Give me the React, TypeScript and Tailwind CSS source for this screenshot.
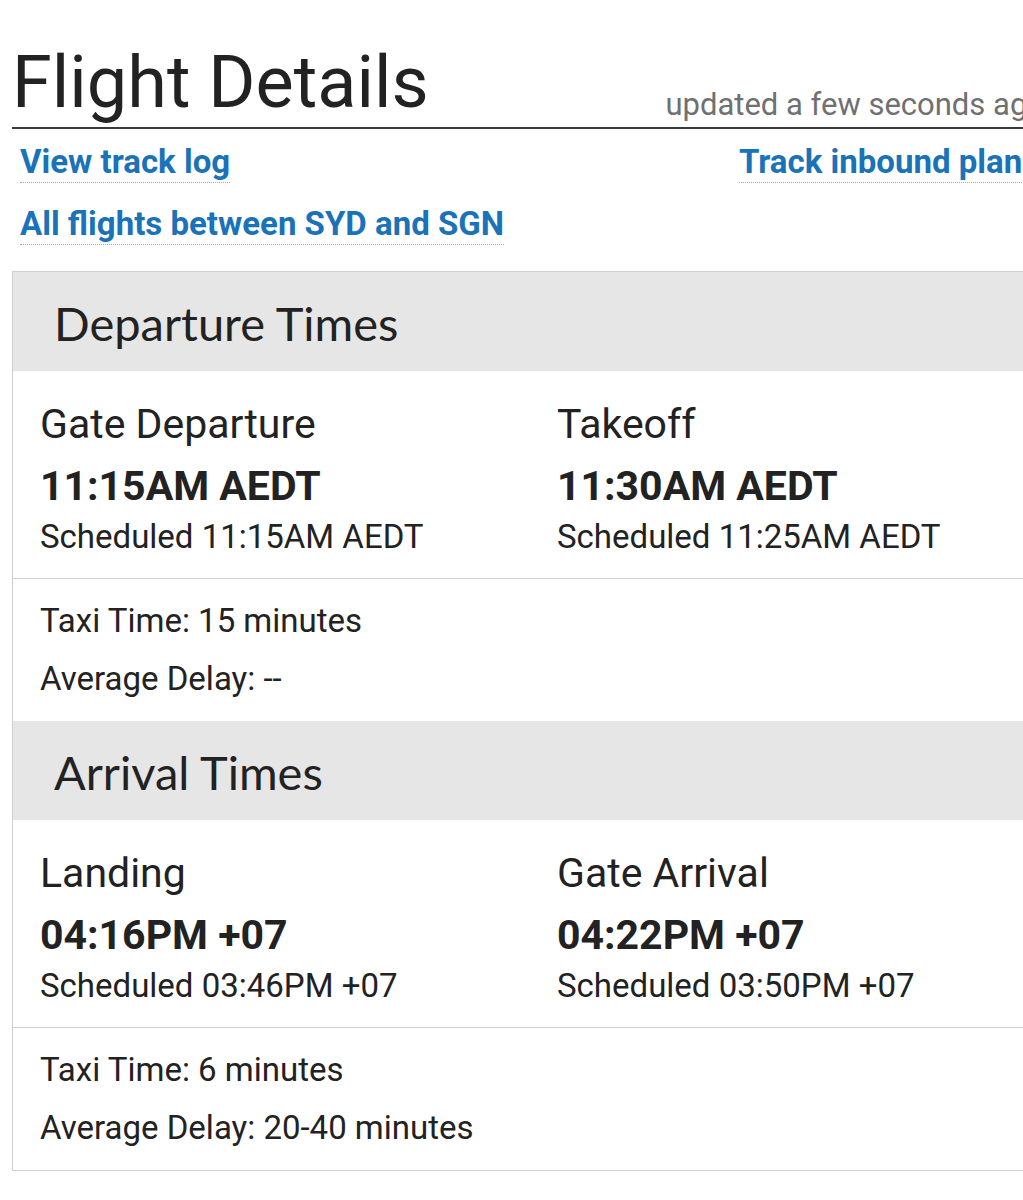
const roboto = "font-['Roboto',_'Liberation_Sans',_sans-serif]"

type Slot = { label: string; actual: string; scheduled: string }

const departure: Slot[] = [
  { label: "Gate Departure", actual: "11:15AM AEDT", scheduled: "Scheduled 11:15AM AEDT" },
  { label: "Takeoff", actual: "11:30AM AEDT", scheduled: "Scheduled 11:25AM AEDT" },
]

const arrival: Slot[] = [
  { label: "Landing", actual: "04:16PM +07", scheduled: "Scheduled 03:46PM +07" },
  { label: "Gate Arrival", actual: "04:22PM +07", scheduled: "Scheduled 03:50PM +07" },
]

function Section({
  title,
  slots,
  taxi,
  delay,
}: {
  title: string
  slots: Slot[]
  taxi: string
  delay: string
}) {
  return (
    <div>
      <div className="flex h-[99px] items-center bg-[#e6e6e6] pl-[41px] pt-[4px] font-['Lato',_sans-serif] text-[47px] text-[#222]">
        {title}
      </div>
      <div className="grid grid-cols-[517px_1fr] border-b border-[#cfcfcf] pb-[21px] pl-[27px] pt-[31px]">
        {slots.map((s) => (
          <div key={s.label} className="flex flex-col">
            <span className="text-[41px] leading-[44px]">{s.label}</span>
            <span className="mt-[18px] text-[41px] font-bold leading-[44px]">{s.actual}</span>
            <span className="mt-[9px] text-[33px] leading-[40px]">{s.scheduled}</span>
          </div>
        ))}
      </div>
      <div className="flex flex-col gap-[18px] pb-[22px] pl-[27px] pt-[22px] text-[33px] leading-[40px]">
        <span>{taxi}</span>
        <span>{delay}</span>
      </div>
    </div>
  )
}

export default function App() {
  return (
    <div className={`w-[1023px] overflow-hidden bg-white text-[#222] ${roboto}`}>
      <div className="w-[1060px] pl-[12px] pr-[15px] pb-[30px]">
        <div className="flex items-end justify-between border-b-2 border-[#3a3a3a] pb-[7px] pt-[45px]">
          <h1 className="text-[72px] leading-[75px]">Flight Details</h1>
          <span className="text-[31px] leading-[30px] text-[#707070]">updated a few seconds ago</span>
        </div>
        <div className="flex flex-col gap-[22px] pl-[8px] pt-[14px] text-[33px] font-bold leading-[38px] text-[#1a72b8]">
          <div className="flex justify-between pr-[5px]">
            <a className="border-b border-dotted border-[#8fb0cc] pb-[1px]">View track log</a>
            <a className="border-b border-dotted border-[#8fb0cc] pb-[1px]">Track inbound plane</a>
          </div>
          <div className="flex">
            <a className="border-b border-dotted border-[#8fb0cc] pb-[1px]">All flights between SYD and SGN</a>
          </div>
        </div>
        <div className="mt-[26px] border border-[#cfcfcf]">
          <Section title="Departure Times" slots={departure} taxi="Taxi Time: 15 minutes" delay="Average Delay: --" />
          <Section title="Arrival Times" slots={arrival} taxi="Taxi Time: 6 minutes" delay="Average Delay: 20-40 minutes" />
        </div>
      </div>
    </div>
  )
}
